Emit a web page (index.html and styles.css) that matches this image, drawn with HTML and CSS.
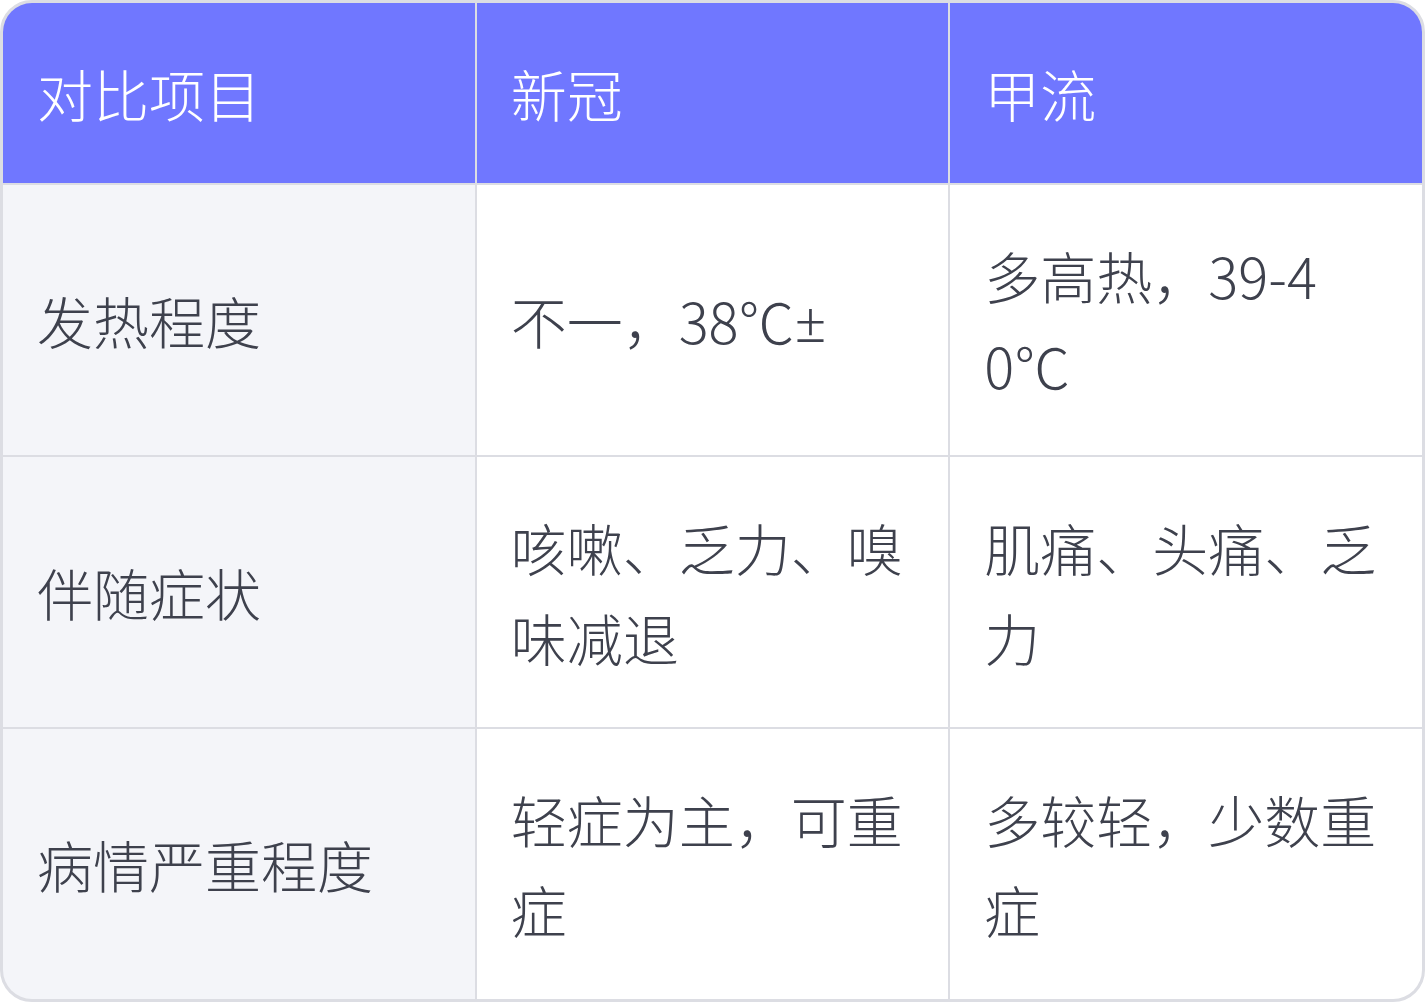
FILE: index.html
```html
<!DOCTYPE html>
<html lang="zh-CN">
<head>
<meta charset="utf-8">
<title>新冠与甲流对比</title>
<link rel="stylesheet" href="styles.css">
</head>
<body>
<div class="table">
  <div class="cell head">对比项目</div>
  <div class="cell head">新冠</div>
  <div class="cell head">甲流</div>

  <div class="cell label">发热程度</div>
  <div class="cell">不一，38℃<span class="sym">±</span></div>
  <div class="cell">多高热，39-40℃</div>

  <div class="cell label">伴随症状</div>
  <div class="cell">咳嗽、乏力、嗅味减退</div>
  <div class="cell">肌痛、头痛、乏力</div>

  <div class="cell label">病情严重程度</div>
  <div class="cell">轻症为主，可重症</div>
  <div class="cell">多较轻，少数重症</div>
</div>
</body>
</html>
```

FILE: styles.css
```css
html, body {
  margin: 0;
  padding: 0;
  background: #ffffff;
}

.table {
  box-sizing: border-box;
  width: 1425px;
  height: 1002px;
  display: grid;
  grid-template-columns: 1fr 1fr 1fr;
  grid-template-rows: 180px 270px 270px 270px;
  gap: 2px;
  background: #dcdde3;
  border: 3px solid #dcdde3;
  border-radius: 32px;
  overflow: hidden;
  font-family: "Noto Sans CJK SC Light", "Noto Sans CJK SC DemiLight", "Noto Sans CJK SC", "Noto Sans", sans-serif;
  font-weight: 300;
  font-size: 56px;
  line-height: 90px;
  color: #3e414d;
}

.cell {
  display: block;
  align-self: stretch;
  display: flex;
  flex-wrap: wrap;
  align-content: center;
  padding: 45px 34px;
  background: #ffffff;
  word-break: break-all;
  min-width: 0;
}

.sym {
  font-family: "Noto Sans", "Open Sans", sans-serif;
  font-weight: 300;
}

.head {
  background: #7077ff;
  color: #ffffff;
}

.label {
  background: #f4f5f9;
}
```
